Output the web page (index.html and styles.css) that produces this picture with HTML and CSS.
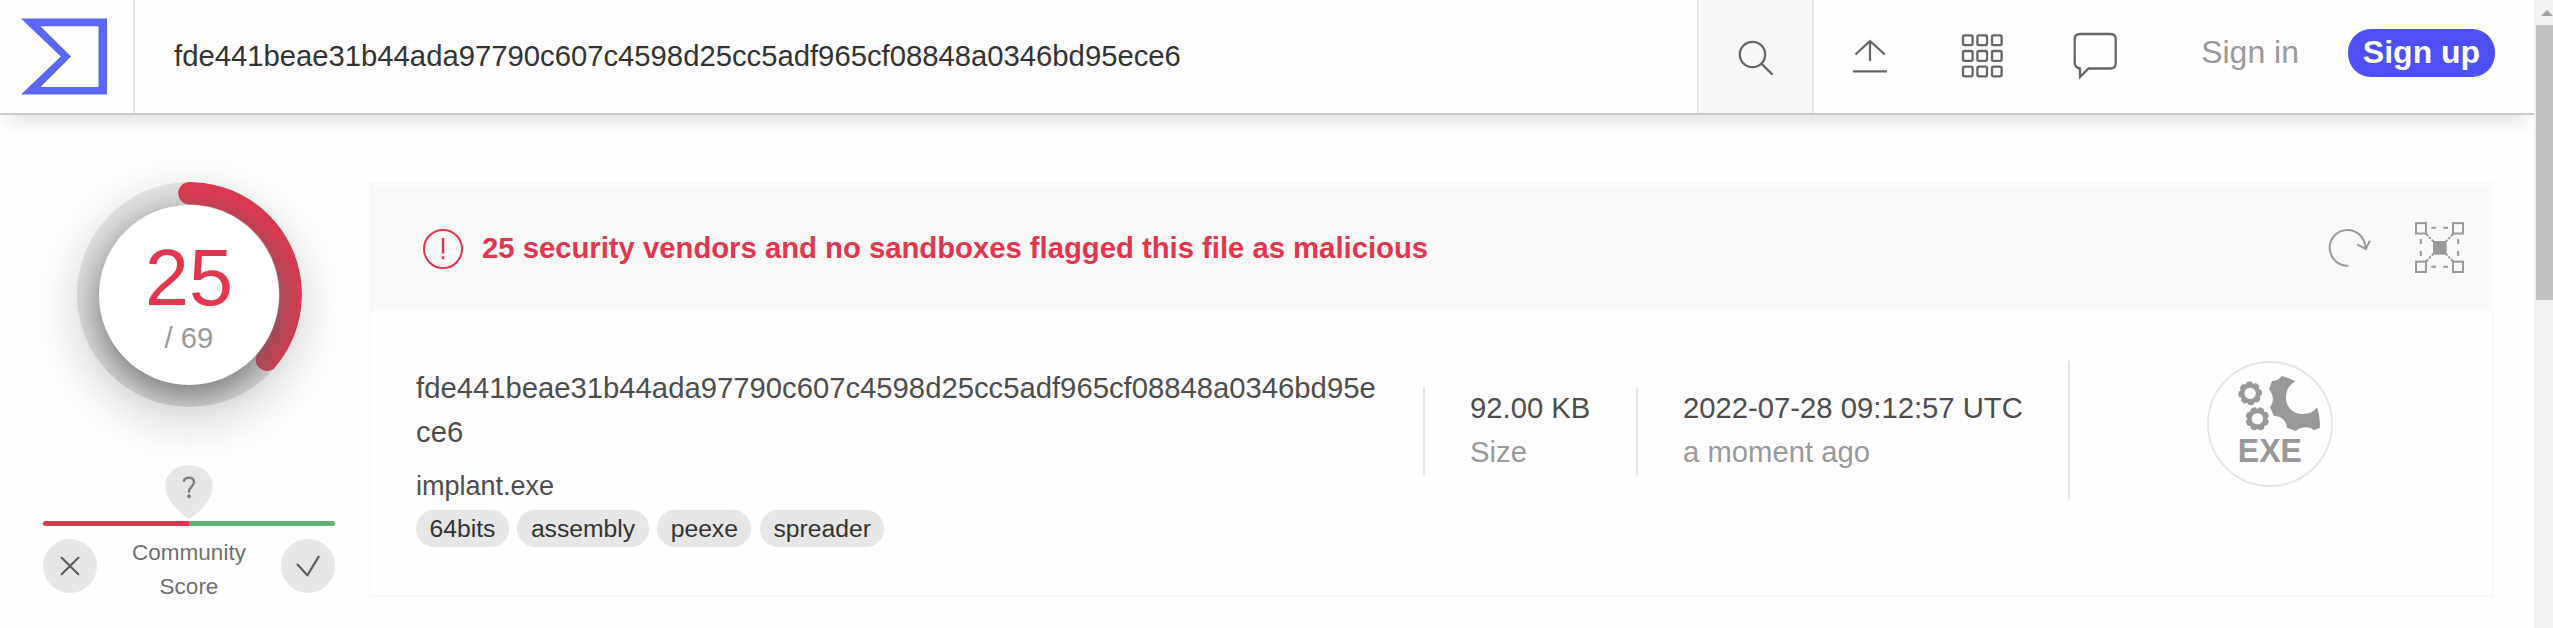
FILE: index.html
```html
<!DOCTYPE html>
<html lang="en">
<head>
<meta charset="utf-8">
<title>File report</title>
<link rel="stylesheet" href="styles.css">
</head>
<body>
<div class="page">
  <header class="topbar">
    <a class="logo">
      <svg width="88" height="78" viewBox="20 18 88 78"><path fill="#5c68f5" fill-rule="evenodd" d="M21 18.6H107V94.6H21L60.8 56.6ZM40.5 26.2L71 56.6L40.5 87H98.5V26.2Z"/></svg>
    </a>
    <div class="query">fde441beae31b44ada97790c607c4598d25cc5adf965cf08848a0346bd95ece6</div>
    <div class="search">
      <svg width="44" height="44" viewBox="1734 35 44 44" class="ico"><circle cx="1752.5" cy="54.5" r="12.7"/><path d="M1761.5 63.8L1772.5 74.6"/></svg>
    </div>
    <nav class="tools">
      <svg width="44" height="50" viewBox="1848 31 44 50" class="ico"><path d="M1870 61V41M1855.5 54.5L1870 41L1884.8 54.5M1853 71.3H1887"/></svg>
      <svg width="44" height="50" viewBox="1961 31 44 50" class="ico">
        <g id="gridrow"><rect x="1964" y="35.4" width="9.6" height="9.8" rx="1.6"/><rect x="1978.4" y="35.4" width="9.6" height="9.8" rx="1.6"/><rect x="1993" y="35.4" width="9.6" height="9.8" rx="1.6"/></g>
        <use href="#gridrow" y="15.6"/><use href="#gridrow" y="31.2"/>
      </svg>
      <svg width="48" height="50" viewBox="2072 31 48 50" class="ico"><path d="M2080 34H2110.500Q2115.700 34 2115.700 39.200V63.300Q2115.700 68.500 2110.500 68.500H2088.500L2080 77V68.500Q2074.700 67.500 2074.700 62.500V39.200Q2074.700 34 2080 34Z"/></svg>
    </nav>
    <div class="auth">
      <a class="signin">Sign in</a>
      <a class="signup">Sign up</a>
    </div>
  </header>
  <main class="report">
    <aside class="score">
      <div class="ring">
        <svg class="arc" width="225" height="225" viewBox="0 0 225 225"><path d="M112.500 11.250A101.250 101.250 0 0 1 190 177.700" fill="none" stroke="#e2364f" stroke-width="22.500" stroke-linecap="round"/></svg>
        <div class="dial"><span class="hits">25</span><span class="total">/ 69</span></div>
      </div>
      <svg class="pin" width="48" height="54" viewBox="0 0 144 162">
        <path fill="#e6e6e6" d="M72 1C112 1 143 27 143 62C143 100 106 142 78 158Q72 162 66 158C38 142 1 100 1 62C1 27 32 1 72 1Z"/>
        <path fill="none" stroke="#808080" stroke-width="7.500" stroke-linecap="round" d="M57 47C60 35 88 34 87 52C86 64 72 66 72 80"/>
        <circle cx="72" cy="94" r="6" fill="#808080"/>
      </svg>
      <div class="bar"><span class="bad"></span><span class="good"></span></div>
      <div class="votes">
        <span class="vote"><svg width="54" height="54" viewBox="0 0 162 162"><path d="M56 56L106 106M106 56L56 106"/></svg></span>
        <span class="label">Community<br>Score</span>
        <span class="vote"><svg width="54" height="54" viewBox="0 0 162 162"><path d="M50 77L79 109L113 53"/></svg></span>
      </div>
    </aside>
    <section class="card">
      <div class="alert">
        <svg class="warn" width="42" height="42" viewBox="422 228 42 42"><g fill="none" stroke="#e2364f" stroke-width="2"><circle cx="443" cy="249" r="19"/><path d="M443 238V253.500M443 256.300V259.300" stroke-width="2.500"/></g></svg>
        <span class="message">25 security vendors and no sandboxes flagged this file as malicious</span>
        <svg class="refresh" width="46" height="46" viewBox="644 676 138 138"><path d="M708 798A53.500 53.500 0 1 1 759 745M735 735L760.500 748L772.500 723"/></svg>
        <svg width="52" height="54" viewBox="903 663 156 162" fill="none" stroke="#999" stroke-width="6">
          <g><rect x="909" y="669.500" width="30" height="31"/><rect x="1020" y="669.500" width="30" height="31"/><rect x="909" y="785" width="30" height="31"/><rect x="1020" y="785" width="30" height="31"/></g>
          <path d="M955 683.500H969M991 683.500H1005M955 800H969M991 800H1005M923.500 717V732M923.500 753V768M1035.500 717V732M1035.500 753V768"/>
          <path stroke-dasharray="12 4 7 4" d="M937 700L962 725M1022 700L998 725M937 786L962 761M1022 786L998 761"/>
          <rect x="960" y="723" width="41" height="41" fill="#999" stroke="none"/>
        </svg>
      </div>
      <div class="details">
        <div class="names">
          <div class="hash">fde441beae31b44ada97790c607c4598d25cc5adf965cf08848a0346bd95ece6</div>
          <div class="filename">implant.exe</div>
          <div class="tags"><span class="tag">64bits</span><span class="tag">assembly</span><span class="tag">peexe</span><span class="tag">spreader</span></div>
        </div>
        <div class="fact size"><span>92.00 KB</span><span class="muted">Size</span></div>
        <div class="fact date"><span>2022-07-28 09:12:57 UTC</span><span class="muted">a moment ago</span></div>
        <div class="type">
          <svg width="126" height="126" viewBox="141 93 378 378" fill="#999">
            <defs>
              <path id="tooth" d="M26 -13Q29 -9 34 -8L36 0L34 8Q29 9 26 13Z"/>
              <g id="gear"><circle r="23" fill="none" stroke="#999" stroke-width="12"/><use href="#tooth"/><use href="#tooth" transform="rotate(45)"/><use href="#tooth" transform="rotate(90)"/><use href="#tooth" transform="rotate(135)"/><use href="#tooth" transform="rotate(180)"/><use href="#tooth" transform="rotate(225)"/><use href="#tooth" transform="rotate(270)"/><use href="#tooth" transform="rotate(315)"/></g>
            </defs>
            <circle cx="330" cy="282" r="186" fill="none" stroke="#e4e4e4" stroke-width="5.500"/>
            <use href="#gear" transform="translate(270.500 190) rotate(-5)"/>
            <use href="#gear" transform="translate(292 266.500) rotate(22)"/>
            <path d="M366 137L407 154C385 165 378 185 378 203C378 232 400 252 430 252C448 252 462 245 471 232C477 250 480 270 480 293L461 301C452 288 420 288 407 303L381 293C380 275 365 257 342 258L330 232C342 215 342 198 327 178L336 153C348 152 358 148 366 137Z"/>
            <text x="233.500" y="397" class="exe" textLength="192" lengthAdjust="spacingAndGlyphs">EXE</text>
          </svg>
        </div>
      </div>
    </section>
  </main>
</div>
<div class="scrollbar"><span class="up"></span><span class="thumb"></span></div>
</body>
</html>
```

FILE: styles.css
```css
* { box-sizing: border-box; }
body {
  margin: 0;
  display: flex;
  height: 628px;
  overflow: hidden;
  background: #fefefe;
  color: #4d4d4d;
  font-family: "Liberation Sans", Arial, sans-serif;
  font-size: 29.25px;
  line-height: 43.875px;
}
svg { display: block; flex: none; }
.page { width: 2534px; overflow: hidden; }
.topbar {
  display: flex;
  height: 115px;
  background: #fefefe;
  border-bottom: 2px solid #c9cdca;
  box-shadow: 0 12px 20px -8px rgba(0, 0, 0, .14);
}
.logo { width: 135px; padding: 18px 0 0 20px; border-right: 2px solid #e6e6e6; }
.query { flex: 1; padding: 35px 0 0 39px; color: #333; white-space: nowrap; }
.search {
  width: 117px;
  padding: 35px 0 0 35px;
  background: #f8f8f8;
  border-left: 2px solid #e6e6e6;
  border-right: 2px solid #e6e6e6;
}
.ico { fill: none; stroke: #666; stroke-width: 2.3; }
.tools { display: flex; width: 358px; gap: 68px; padding: 31px 0 0 34px; }
.auth { display: flex; width: 362px; justify-content: flex-end; align-items: flex-start; gap: 49px; padding: 29px 39px 0 0; font-size: 32px; }
.signin { line-height: 46px; color: #999; white-space: nowrap; }
.signup {
  width: 147px;
  height: 48px;
  border-radius: 23px;
  background: #4d4ff7;
  color: #fff;
  font-weight: 700;
  line-height: 46px;
  text-align: center;
  white-space: nowrap;
}
.report { display: flex; gap: 34px; padding: 67px 40px 0 43px; }
.score { display: flex; flex-direction: column; align-items: center; width: 292px; }
.ring {
  position: relative;
  width: 225px;
  height: 225px;
  padding: 22.5px;
  border-radius: 50%;
  overflow: hidden;
  background: #e6e6e6;
  box-shadow: 0 14px 46px rgba(0, 0, 0, .19);
}
.arc { position: absolute; left: 0; top: 0; }
.dial {
  position: relative;
  display: flex;
  flex-direction: column;
  align-items: center;
  height: 180px;
  padding-top: 28px;
  border-radius: 50%;
  background: #fff;
  box-shadow: 0 12px 45px #646464;
}
.hits { font-size: 79px; line-height: 90px; color: #e2364f; }
.total { margin-top: -2px; line-height: 34px; color: #999; }
.pin { margin-top: 58px; }
.bar { display: flex; width: 292px; height: 5px; margin-top: 2px; border-radius: 2.5px; overflow: hidden; }
.bad, .good { flex: 1; }
.bad { background: #e2364f; }
.good { background: #5eb274; }
.votes { display: flex; justify-content: space-between; width: 292px; margin-top: 13px; }
.vote { width: 54px; height: 54px; border-radius: 50%; background: #e6e6e6; }
.vote path { fill: none; stroke: #5e5e5e; stroke-width: 6.5; stroke-linecap: round; stroke-linejoin: round; }
.label { margin-top: -3px; font-size: 22.5px; line-height: 34px; color: #707070; text-align: center; }
.card { width: 2125px; height: 415px; padding-top: 1px; border: 2px solid #f9f9f9; }
.alert { display: flex; align-items: flex-start; height: 126px; padding: 43px 25px 0 51px; margin-right: 1px; background: #f9f9f9; }
.message { flex: 1; margin: -1px 0 0 18px; color: #e2364f; font-weight: 700; white-space: nowrap; }
.refresh { margin: -3px 41px 0 0; fill: none; stroke: #999; stroke-width: 6; stroke-linecap: butt; }
.alert > svg:last-child { margin: -7px 0 0; }
.details { display: flex; padding: 50px 0 0 45px; }
.names { width: 1007px; padding-top: 6px; color: #4d4d4d; }
.hash { width: 965px; word-break: break-all; }
.filename { margin-top: 9px; font-size: 27px; line-height: 44px; }
.tags { display: flex; gap: 8.5px; margin-top: 2px; }
.tag {
  height: 37px;
  padding: 0 13.5px;
  border-radius: 18px;
  background: #e6e6e6;
  color: #333;
  font-size: 24.7px;
  line-height: 37px;
}
.fact { display: flex; flex-direction: column; height: 88px; margin-top: 26px; border-left: 2px solid #e6e6e6; white-space: nowrap; }
.size { width: 213px; padding-left: 45px; }
.date { width: 432px; padding-left: 45px; }
.muted { color: #999; }
.type { height: 139px; padding-left: 137px; border-left: 2px solid #e6e6e6; }
.exe { font-size: 98px; font-weight: 700; }
.scrollbar { display: flex; flex-direction: column; width: 19px; padding: 10px 0 0 2px; background: #f1f1f1; }
.up { width: 12px; height: 6px; margin-left: 5px; background: #a3a3a3; clip-path: polygon(50% 0, 100% 100%, 0 100%); }
.thumb { height: 275px; margin-top: 9px; background: #c1c1c1; }
```
